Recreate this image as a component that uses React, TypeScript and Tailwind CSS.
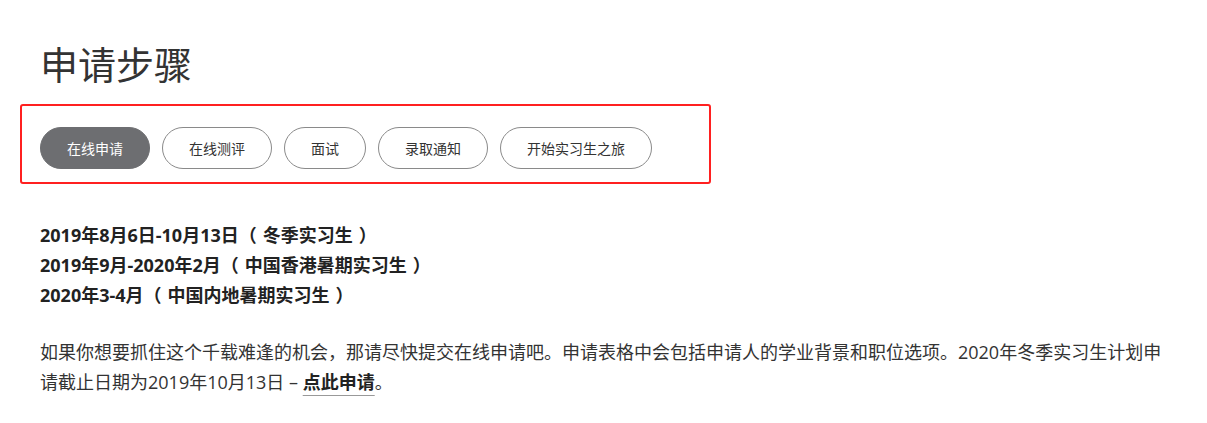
import React from "react";

const steps = ["在线申请", "在线测评", "面试", "录取通知", "开始实习生之旅"];

const font = "font-['Open_Sans','Noto_Sans_CJK_SC',sans-serif]";

// fullwidth brackets sit centred in the reference font, so pad them here
function Paren({ children }: { children: React.ReactNode }) {
  return (
    <>
      <span className="pr-[6px]">（</span>
      {children}
      <span className="pl-[6px]">）</span>
    </>
  );
}

export default function App() {
  return (
    <div className={`w-[1207px] h-[423px] bg-white text-[#333] ${font}`}>
      <div className="pl-[40px] pt-[38px]">
        <h1 className="text-[38px] leading-[52px] font-normal text-[#333]">申请步骤</h1>
      </div>

      {/* step pills */}
      <div className="ml-[20px] mt-[14px] w-[691px] h-[80px] border-2 border-[#ff2020] rounded-[3px] pl-[18px] pt-[21px]">
        <div className="flex gap-[12px]">
          {steps.map((s, i) => (
            <div
              key={s}
              className={
                i === 0
                  ? "h-[42px] px-[26px] rounded-full bg-[#6d6e71] border border-[#6d6e71] text-white text-[14px] flex items-center"
                  : "h-[42px] px-[26px] rounded-full border border-[#8a8a8a] text-[#333] text-[14px] flex items-center"
              }
            >
              {s}
            </div>
          ))}
        </div>
      </div>

      <div className="pl-[40px] pt-[36px] text-[18px] leading-[30px] font-bold text-[#222]">
        <p>
          2019年8月6日-10月13日<Paren>冬季实习生</Paren>
        </p>
        <p>
          2019年9月-2020年2月<Paren>中国香港暑期实习生</Paren>
        </p>
        <p>
          2020年3-4月<Paren>中国内地暑期实习生</Paren>
        </p>
      </div>

      <p className="pl-[40px] pt-[27px] w-[1170px] text-[18px] leading-[30px] text-[#333]">
        如果你想要抓住这个千载难逢的机会，那请尽快提交在线申请吧。申请表格中会包括申请人的学业背景和职位选项。2020年冬季实习生计划申请截止日期为2019年10月13日 –{" "}
        <a className="font-bold text-[#222] underline decoration-[#999] underline-offset-[6px]">点此申请</a>。
      </p>
    </div>
  );
}
